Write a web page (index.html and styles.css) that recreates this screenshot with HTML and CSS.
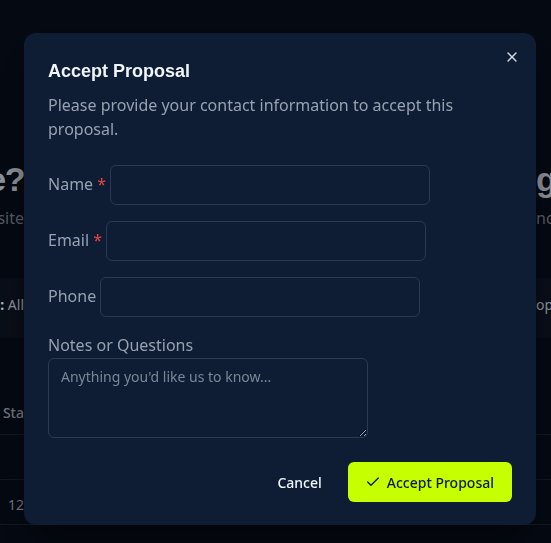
FILE: index.html
```html
<!DOCTYPE html>
<html lang="en">
<head>
<meta charset="utf-8">
<title>Accept Proposal</title>
<link rel="stylesheet" href="styles.css">
</head>
<body>
<main class="page" aria-hidden="true">
  <section class="hero">
    <div class="edge-row hero-title">
      <div class="edge-l"><span>Ready to move forward with your website?</span></div>
      <div class="edge-r"><span>g</span></div>
    </div>
    <div class="edge-row hero-sub">
      <div class="edge-l"><span>Review the proposal for your new website</span></div>
      <div class="edge-r"><span>nd</span></div>
    </div>
  </section>
  <section class="toolbar">
    <div class="edge-row">
      <div class="edge-l"><span><b>Status:</b> All</span></div>
      <div class="edge-r"><span>op</span></div>
    </div>
  </section>
  <section class="table">
    <div class="edge-row thead">
      <div class="edge-l"><span>Sta</span></div>
      <div class="edge-r"><span></span></div>
    </div>
    <div class="edge-row trow">
      <div class="edge-l"><span></span></div>
      <div class="edge-r"><span></span></div>
    </div>
    <div class="edge-row trow">
      <div class="edge-l"><span>12</span></div>
      <div class="edge-r"><span></span></div>
    </div>
    <div class="edge-row trow">
      <div class="edge-l"><span></span></div>
      <div class="edge-r"><span></span></div>
    </div>
  </section>
</main>

<div class="overlay">
  <div class="dialog" role="dialog" aria-labelledby="dlg-title">
    <button class="close" type="button" aria-label="Close">
      <svg viewBox="0 0 24 24" width="16" height="16" fill="none" stroke="currentColor" stroke-width="2" stroke-linecap="round" stroke-linejoin="round"><path d="M18 6 6 18"/><path d="m6 6 12 12"/></svg>
    </button>
    <h2 id="dlg-title" class="title">Accept Proposal</h2>
    <p class="desc">Please provide your contact information to accept this proposal.</p>
    <form class="form">
      <label class="inline-field"><span>Name <span class="req">*</span></span><input type="text"></label>
      <label class="inline-field"><span>Email <span class="req">*</span></span><input type="email"></label>
      <label class="inline-field"><span>Phone</span><input type="tel"></label>
      <label class="block-field"><span>Notes or Questions</span><textarea placeholder="Anything you'd like us to know..."></textarea></label>
      <div class="actions">
        <button type="button" class="btn-ghost">Cancel</button>
        <button type="button" class="btn-primary">
          <svg viewBox="0 0 24 24" width="16" height="16" fill="none" stroke="currentColor" stroke-width="2" stroke-linecap="round" stroke-linejoin="round"><path d="M20 6 9 17l-5-5"/></svg>
          Accept Proposal
        </button>
      </div>
    </form>
  </div>
</div>
</body>
</html>
```
FILE: styles.css
```css
* { box-sizing: border-box; }
html, body { margin: 0; padding: 0; }
body {
  background: #050a14;
  font-family: "Noto Sans", "Open Sans", sans-serif;
  color: #e2e8f0;
  width: 551px;
  height: 543px;
  overflow: hidden;
}

/* background page */
.page { width: 551px; }
.edge-row {
  display: flex;
  justify-content: space-between;
  align-items: center;
}
.edge-l {
  width: 24px;
  display: flex;
  justify-content: flex-end;
  overflow: hidden;
  white-space: nowrap;
}
.edge-r {
  width: 15px;
  overflow: hidden;
  white-space: nowrap;
}
.hero { padding-top: 159px; }
.hero-title {
  font-family: "Liberation Sans", Arial, sans-serif;
  font-weight: 700;
  font-size: 34px;
  letter-spacing: -1.5px;
  line-height: 40px;
  color: #9da1a9;
}
.hero-sub {
  margin-top: 7px;
  font-size: 16px;
  line-height: 24px;
  color: #5f6673;
}
.toolbar {
  margin-top: 48px;
  height: 60px;
  background: #0a101b;
  padding-top: 17px;
  font-size: 14px;
  line-height: 20px;
  color: #9ea3ab;
}
.toolbar b { color: #c3c7cd; }
.table { margin-top: 52px; }
.thead, .trow {
  height: 45px;
  border-bottom: 1px solid #131b27;
  font-size: 14px;
  color: #7d8490;
}
.thead { font-weight: 500; }
.trow .edge-l span { padding-top: 4px; }

/* overlay + dialog */
.overlay {
  position: fixed;
  inset: 0;
  background: rgba(0, 0, 0, 0.08);
}
.dialog {
  position: absolute;
  left: 24px;
  top: 33px;
  width: 512px;
  background: #0e1d34;
  border-radius: 12px;
  padding: 25px 24px 23px;
  box-shadow: 0 20px 40px -8px rgba(0, 0, 0, 0.6);
}
.close {
  position: absolute;
  top: 16px;
  right: 16px;
  width: 16px;
  height: 16px;
  padding: 0;
  border: 0;
  background: none;
  color: #d5dbe3;
  display: flex;
  cursor: pointer;
}
.title {
  margin: 0;
  font-family: "Liberation Sans", Arial, sans-serif;
  font-weight: 700;
  font-size: 18px;
  line-height: 26px;
  color: #f1f5f9;
}
.desc {
  margin: 9px 0 0;
  font-size: 16px;
  line-height: 24px;
  color: #97a1b0;
}
.form {
  margin-top: 24px;
  display: flex;
  flex-direction: column;
  gap: 16px;
}
.inline-field {
  display: flex;
  align-items: center;
  gap: 4px;
  font-size: 16px;
  line-height: 24px;
  color: #97a1b0;
}
.inline-field > span { margin-bottom: 3px; }
.req { color: #ef4444; }
.inline-field input {
  width: 320px;
  height: 40px;
  background: transparent;
  border: 1px solid #2a3a53;
  border-radius: 6px;
  color: #e2e8f0;
  font: inherit;
  padding: 0 12px;
  outline: none;
}
.block-field {
  display: flex;
  flex-direction: column;
  font-size: 16px;
  line-height: 24px;
  color: #97a1b0;
}
.block-field textarea {
  margin-top: 1px;
  width: 320px;
  height: 80px;
  background: transparent;
  border: 1px solid #2a3a53;
  border-radius: 6px;
  color: #e2e8f0;
  font-family: "Noto Sans", "Open Sans", sans-serif;
  font-size: 14px;
  line-height: 20px;
  padding: 8px 12px;
  outline: none;
  resize: vertical;
}
.block-field textarea::placeholder { color: #7c8696; }
.actions {
  margin-top: 8px;
  display: flex;
  justify-content: flex-end;
  align-items: center;
  gap: 10px;
}
.btn-ghost, .btn-primary {
  height: 40px;
  border: 0;
  border-radius: 6px;
  font-family: "Noto Sans", "Open Sans", sans-serif;
  font-size: 14px;
  font-weight: 500;
  cursor: pointer;
}
.btn-ghost {
  background: transparent;
  color: #f1f5f9;
  padding: 0 16px;
}
.btn-primary {
  background: #c6ff00;
  color: #0f172a;
  padding: 0 18px 0 17px;
  display: flex;
  align-items: center;
  gap: 6px;
}
```
